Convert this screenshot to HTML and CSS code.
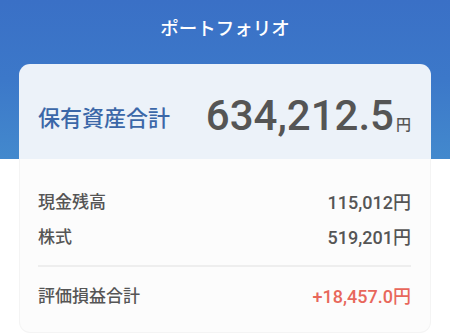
FILE: index.html
```html
<!DOCTYPE html>
<html lang="ja">
<head>
<meta charset="utf-8">
<link rel="stylesheet" href="styles.css">
</head>
<body>
<div class="page">
  <header class="header">
    <h1 class="title">ポートフォリオ</h1>
    <div class="summary">
      <span class="summary-label">保有資産合計</span>
      <span class="summary-value">634,212.5<span class="yen-small">円</span></span>
    </div>
  </header>
  <section class="details">
    <div class="row"><span class="label">現金残高</span><span class="value">115,012<span class="yen">円</span></span></div>
    <div class="row"><span class="label">株式</span><span class="value">519,201<span class="yen">円</span></span></div>
    <div class="divider"></div>
    <div class="row"><span class="label">評価損益合計</span><span class="value gain">+18,457.0<span class="yen">円</span></span></div>
  </section>
</div>
</body>
</html>
```
FILE: styles.css
```css
* { box-sizing: border-box; }
html, body { margin: 0; padding: 0; background: #ffffff; }
body {
  width: 450px;
  height: 335px;
  overflow: hidden;
  font-family: "Roboto", "Noto Sans CJK JP", sans-serif;
}
.header {
  height: 159px;
  background: linear-gradient(180deg, #3a70c6 0%, #3c78c9 50%, #4389cd 100%);
  padding: 0 19px;
  display: flex;
  flex-direction: column;
}
.title {
  margin: 0;
  height: 64px;
  padding-top: 13px;
  text-align: center;
  color: #ffffff;
  font-family: "Noto Sans CJK JP", sans-serif;
  font-size: 18.5px;
  font-weight: 500;
  line-height: 28px;
}
.summary {
  flex: 1;
  background: #ecf2f9;
  border-radius: 11px 11px 0 0;
  display: flex;
  align-items: center;
  justify-content: space-between;
  padding: 8px 20px 0 19px;
}
.summary-label {
  color: #3b67a8;
  font-family: "Noto Sans CJK JP", sans-serif;
  font-size: 22px;
  font-weight: 500;
}
.summary-value {
  color: #555555;
  font-family: "Roboto", sans-serif;
  font-size: 42px;
  font-weight: 500;
}
.yen-small {
  font-family: "Noto Sans CJK JP", sans-serif;
  font-size: 15px;
  font-weight: 500;
  margin-left: 2px;
}
.details {
  margin: 0 19px;
  background: #fcfcfc;
  border: 1px solid #f4f4f4;
  border-top: none;
  border-radius: 0 0 11px 11px;
  padding: 24px 19px 14px 18px;
  height: 174px;
}
.row {
  display: flex;
  justify-content: space-between;
  align-items: center;
  height: 35px;
  color: #555555;
  font-family: "Noto Sans CJK JP", sans-serif;
  font-size: 17px;
  font-weight: 500;
}
.value {
  font-family: "Roboto", sans-serif;
  font-weight: 500;
  font-size: 18px;
}
.yen {
  font-family: "Noto Sans CJK JP", sans-serif;
  font-size: 18px;
}
.gain { color: #e8675b; }
.divider {
  height: 2px;
  background: #eeeeee;
  margin: 12px 0 10px;
}
```
